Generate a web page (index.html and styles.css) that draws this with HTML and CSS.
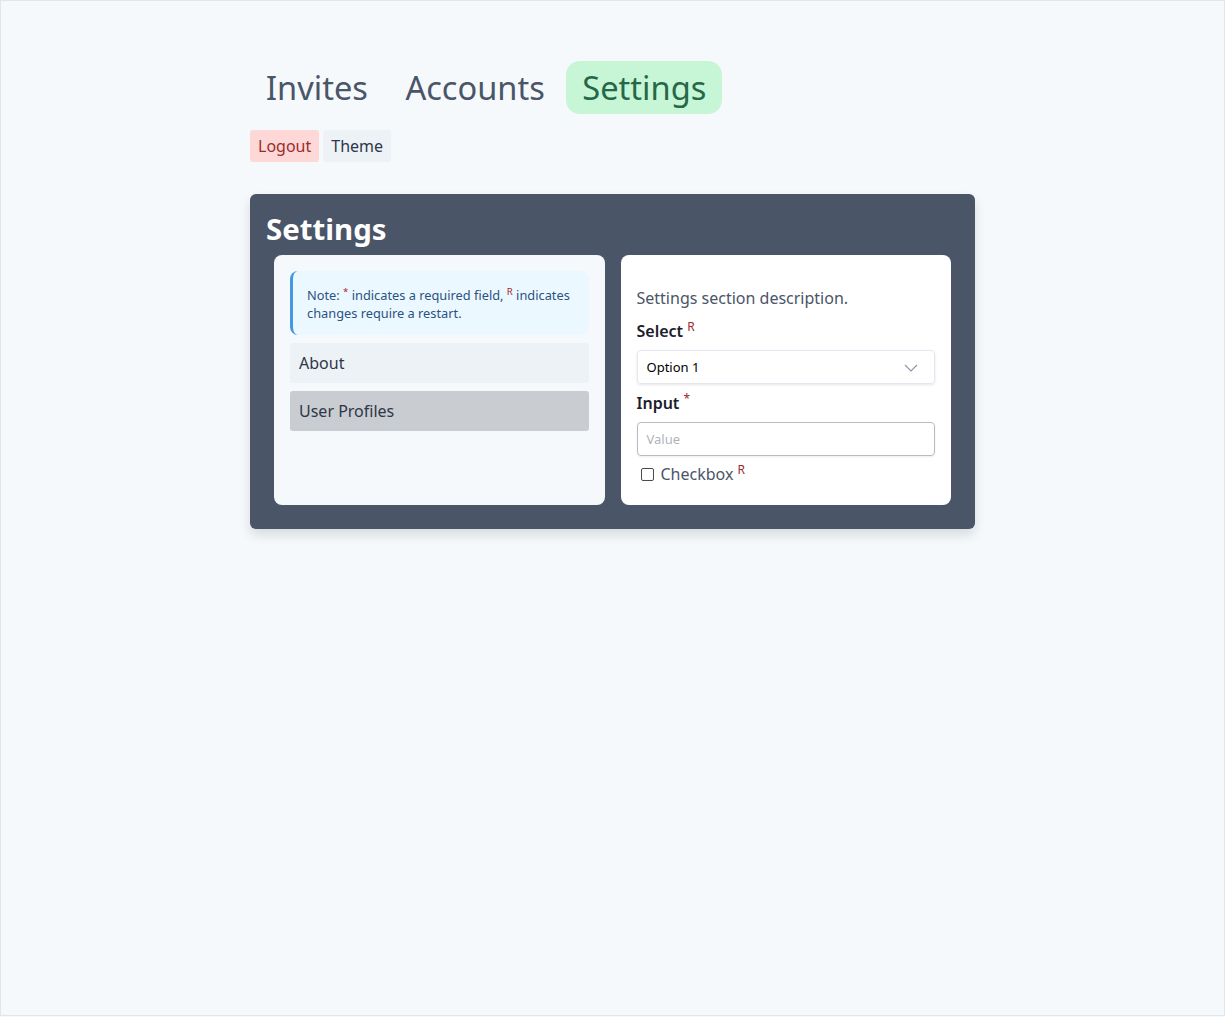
FILE: index.html
```html
<!DOCTYPE html>
<html>
<head>
<meta charset="utf-8">
<link rel="stylesheet" href="styles.css">
</head>
<body>
<div class="page">
  <div class="container">
    <nav class="tabs">
      <a class="tab">Invites</a>
      <a class="tab">Accounts</a>
      <a class="tab active">Settings</a>
    </nav>
    <div class="actions">
      <button class="btn btn-logout">Logout</button>
      <button class="btn btn-theme">Theme</button>
    </div>
    <section class="panel">
      <h1 class="panel-title">Settings</h1>
      <div class="panel-body">
        <div class="card card-side">
          <div class="note">Note: <sup class="mark">*</sup> indicates a required field, <sup class="mark">R</sup> indicates changes require a restart.</div>
          <div class="side-item">About</div>
          <div class="side-item selected">User Profiles</div>
        </div>
        <div class="card card-main">
          <p class="desc">Settings section description.</p>
          <label class="field-label">Select <sup class="mark">R</sup></label>
          <div class="select">
            <span>Option 1</span>
            <svg class="chev" width="14" height="8" viewBox="0 0 14 8"><path d="M1 1 L7 7 L13 1" fill="none" stroke="#8a94a3" stroke-width="1.1"/></svg>
          </div>
          <label class="field-label">Input <sup class="mark">*</sup></label>
          <div class="input"><span class="placeholder">Value</span></div>
          <div class="check-row">
            <span class="checkbox"></span>
            <span class="check-label">Checkbox <sup class="mark">R</sup></span>
          </div>
        </div>
      </div>
    </section>
  </div>
</div>
</body>
</html>
```
FILE: styles.css
```css
* { box-sizing: border-box; }
html, body { margin: 0; padding: 0; background: #f5f9fc; }
body { font-family: "Noto Sans", "Open Sans", sans-serif; color: #2d3748; }
.page {
  height: 1016px;
  border: 1px solid #e2e6ea;
  background: #f5f9fc;
}
.container {
  width: 725px;
  margin-left: 249px;
  padding-top: 60px;
}
.tabs { display: flex; gap: 5.5px; align-items: center; }
.tab {
  font-size: 32.6px;
  line-height: 53px;
  padding: 0 16px;
  color: #4a5568;
  border-radius: 14px;
}
.tab.active { background: #c6f6d5; color: #276749; }
.actions { display: flex; gap: 4px; margin-top: 16px; }
.btn {
  font-family: inherit;
  font-size: 16px;
  border: none;
  height: 32px;
  padding: 0 8px;
  border-radius: 3px;
}
.btn-logout { background: #fed7d7; color: #9b2c2c; }
.btn-theme { background: #edf2f7; color: #2d3748; }
.panel {
  margin-top: 32px;
  background: #4a5568;
  border-radius: 6px;
  padding: 14px 24px 24px;
  box-shadow: 0 6px 12px rgba(0,0,0,0.12);
}
.panel-title {
  margin: 0 0 0 -8px;
  font-size: 29.4px;
  font-weight: 700;
  color: #ffffff;
  line-height: 42px;
}
.panel-body { display: flex; gap: 16px; margin-top: 5px; }
.card {
  flex: 1;
  height: 250px;
  border-radius: 8px;
  padding: 16px;
}
.card-side { background: #f5f9fc; display: flex; flex-direction: column; gap: 8px; }
.card-main { background: #ffffff; padding-top: 31px; }
.mark { color: #9b2c2c; font-size: 0.75em; vertical-align: 0; position: relative; top: -0.5em; line-height: 0; font-weight: 400; }
.note {
  background: #ebf8ff;
  border-left: 3px solid #4299e1;
  border-radius: 8px;
  padding: 15px 10px 13px 14px;
  font-size: 12.8px;
  line-height: 18px;
  color: #2c5282;
}
.side-item {
  height: 40px;
  line-height: 40px;
  padding: 0 9px;
  border-radius: 3px;
  background: #edf2f7;
  font-size: 16px;
  color: #2d3748;
}
.side-item.selected { background: #c9cdd1; }
.desc { margin: 0 0 9px; font-size: 16px; line-height: 24px; color: #4a5568; }
.field-label { display: block; font-size: 16px; font-weight: 600; color: #1a202c; line-height: 24px; margin-bottom: 7px; }
.select, .input {
  height: 34px;
  border-radius: 4px;
  display: flex;
  align-items: center;
  justify-content: space-between;
  padding: 0 16px 0 9px;
  font-size: 13px;
}
.select { border: 1px solid #e2e8f0; box-shadow: 0 1px 3px rgba(0,0,0,0.1); color: #000; margin-bottom: 7px; }
.chev { margin-top: 2px; }
.input { border: 1px solid #b5bcc6; box-shadow: 0 1px 2px rgba(0,0,0,0.08); margin-bottom: 6px; }
.placeholder { color: #b0b4ba; }
.check-row { display: flex; align-items: center; gap: 7px; padding-left: 4px; }
.checkbox {
  width: 13px; height: 13px;
  border: 1px solid #4a4a4a;
  border-radius: 2px;
  background: #fff;
}
.check-label { font-size: 16px; color: #4a5568; line-height: 24px; }
```
